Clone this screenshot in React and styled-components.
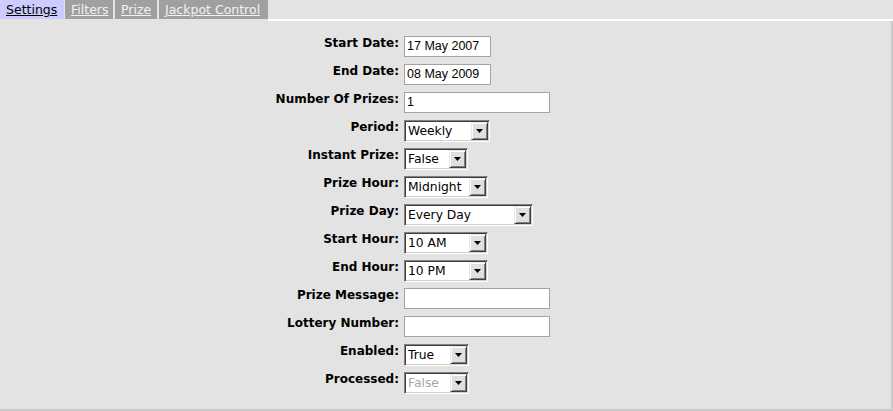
import React from 'react'
import styled, { createGlobalStyle } from 'styled-components'

const GlobalStyle = createGlobalStyle`
  html, body {
    margin: 0;
    padding: 0;
    background: #e3e3e3;
  }
  body {
    font-family: "DejaVu Sans", Verdana, sans-serif;
    font-size: 12px;
    color: #000;
  }
`

const Page = styled.div`
  width: 893px;
  height: 411px;
  display: flex;
  flex-direction: column;
  overflow: hidden;
`

const TabBar = styled.div`
  display: flex;
  height: 21px;
`

const Tab = styled.a`
  display: flex;
  align-items: center;
  height: 19px;
  padding: 0 6px;
  margin-right: ${p => (p.$first ? '1px' : '2px')};
  width: ${p => p.$w}px;
  box-sizing: border-box;
  background: ${p => (p.$active ? '#ccccff' : '#a0a0a0')};
  color: ${p => (p.$active ? '#000' : '#f2f2f2')};
  text-decoration: underline;
  font-size: 12.5px;
  white-space: nowrap;
  cursor: pointer;
`

const TabFiller = styled.div`
  flex: 1;
  height: 19px;
  border-bottom: 2px solid #fff;
  margin-left: -2px;
`

const Panel = styled.div`
  flex: 1;
  border-right: 2px solid #c9c9c9;
  border-bottom: 2px solid #c9c9c9;
  padding-top: 15px;
  display: grid;
  grid-template-columns: 399px 1fr;
  grid-auto-rows: 28px;
  column-gap: 5px;
  align-content: start;
`

const Label = styled.div`
  text-align: right;
  font-weight: bold;
  font-size: 12px;
  line-height: 14px;
  white-space: nowrap;
`

const Field = styled.div`
  display: flex;
  align-items: flex-start;
`

const TextBox = styled.div`
  width: ${p => p.$w}px;
  height: 21px;
  box-sizing: border-box;
  background: #fff;
  border: 1px solid #a3a3a3;
  padding: 2px 2px;
  font-family: "Liberation Sans", Arial, sans-serif;
  font-size: 12.5px;
  line-height: 15px;
  color: #000;
`

const SelectBox = styled.div`
  width: ${p => p.$w}px;
  height: 22px;
  box-sizing: border-box;
  display: flex;
  align-items: center;
  background: #fff;
  border-style: solid;
  border-width: 1px;
  border-color: #808080 #fff #fff #808080;
  box-shadow: inset 1px 1px 0 #404040, inset -1px -1px 0 #d4d0c8;
  padding: 1px 1px 1px 3px;
  font-size: 12.3px;
  color: ${p => (p.$disabled ? '#a6a6a6' : '#000')};
`

const SelectText = styled.span`
  flex: 1;
  white-space: nowrap;
  overflow: hidden;
`

const ArrowButton = styled.div`
  width: 17px;
  height: 18px;
  box-sizing: border-box;
  background: #e0e0e0;
  border-style: solid;
  border-width: 1px;
  border-color: #e8e8e8 #404040 #404040 #e8e8e8;
  box-shadow: inset 1px 1px 0 #fff, inset -1px -1px 0 #808080;
  display: flex;
  align-items: center;
  justify-content: center;
`

const rows = [
  { label: 'Start Date:', kind: 'text', value: '17 May 2007', w: 87 },
  { label: 'End Date:', kind: 'text', value: '08 May 2009', w: 87 },
  { label: 'Number Of Prizes:', kind: 'text', value: '1', w: 146 },
  { label: 'Period:', kind: 'select', value: 'Weekly', w: 86 },
  { label: 'Instant Prize:', kind: 'select', value: 'False', w: 64 },
  { label: 'Prize Hour:', kind: 'select', value: 'Midnight', w: 84 },
  { label: 'Prize Day:', kind: 'select', value: 'Every Day', w: 129 },
  { label: 'Start Hour:', kind: 'select', value: '10 AM', w: 84 },
  { label: 'End Hour:', kind: 'select', value: '10 PM', w: 84 },
  { label: 'Prize Message:', kind: 'text', value: '', w: 146 },
  { label: 'Lottery Number:', kind: 'text', value: '', w: 146 },
  { label: 'Enabled:', kind: 'select', value: 'True', w: 65 },
  { label: 'Processed:', kind: 'select', value: 'False', w: 65, disabled: true }
]

const tabs = [
  { name: 'Settings', w: 64, active: true },
  { name: 'Filters', w: 48 },
  { name: 'Prize', w: 42 },
  { name: 'Jackpot Control', w: 109 }
]

function Arrow () {
  return (
    <ArrowButton>
      <svg width='7' height='4' viewBox='0 0 7 4'>
        <path d='M0 0h7L3.5 4z' fill='#000' />
      </svg>
    </ArrowButton>
  )
}

function Select ({ value, w, disabled }) {
  return (
    <SelectBox $w={w} $disabled={disabled}>
      <SelectText>{value}</SelectText>
      <Arrow />
    </SelectBox>
  )
}

export default function App () {
  return (
    <Page>
      <GlobalStyle />
      <TabBar>
        {tabs.map((t, i) => (
          <Tab key={t.name} $w={t.w} $active={t.active} $first={i === 0}>
            {t.name}
          </Tab>
        ))}
        <TabFiller />
      </TabBar>
      <Panel>
        {rows.map(r => (
          <React.Fragment key={r.label}>
            <Label>{r.label}</Label>
            <Field>
              {r.kind === 'text'
                ? <TextBox $w={r.w}>{r.value}</TextBox>
                : <Select value={r.value} w={r.w} disabled={r.disabled} />}
            </Field>
          </React.Fragment>
        ))}
      </Panel>
    </Page>
  )
}
